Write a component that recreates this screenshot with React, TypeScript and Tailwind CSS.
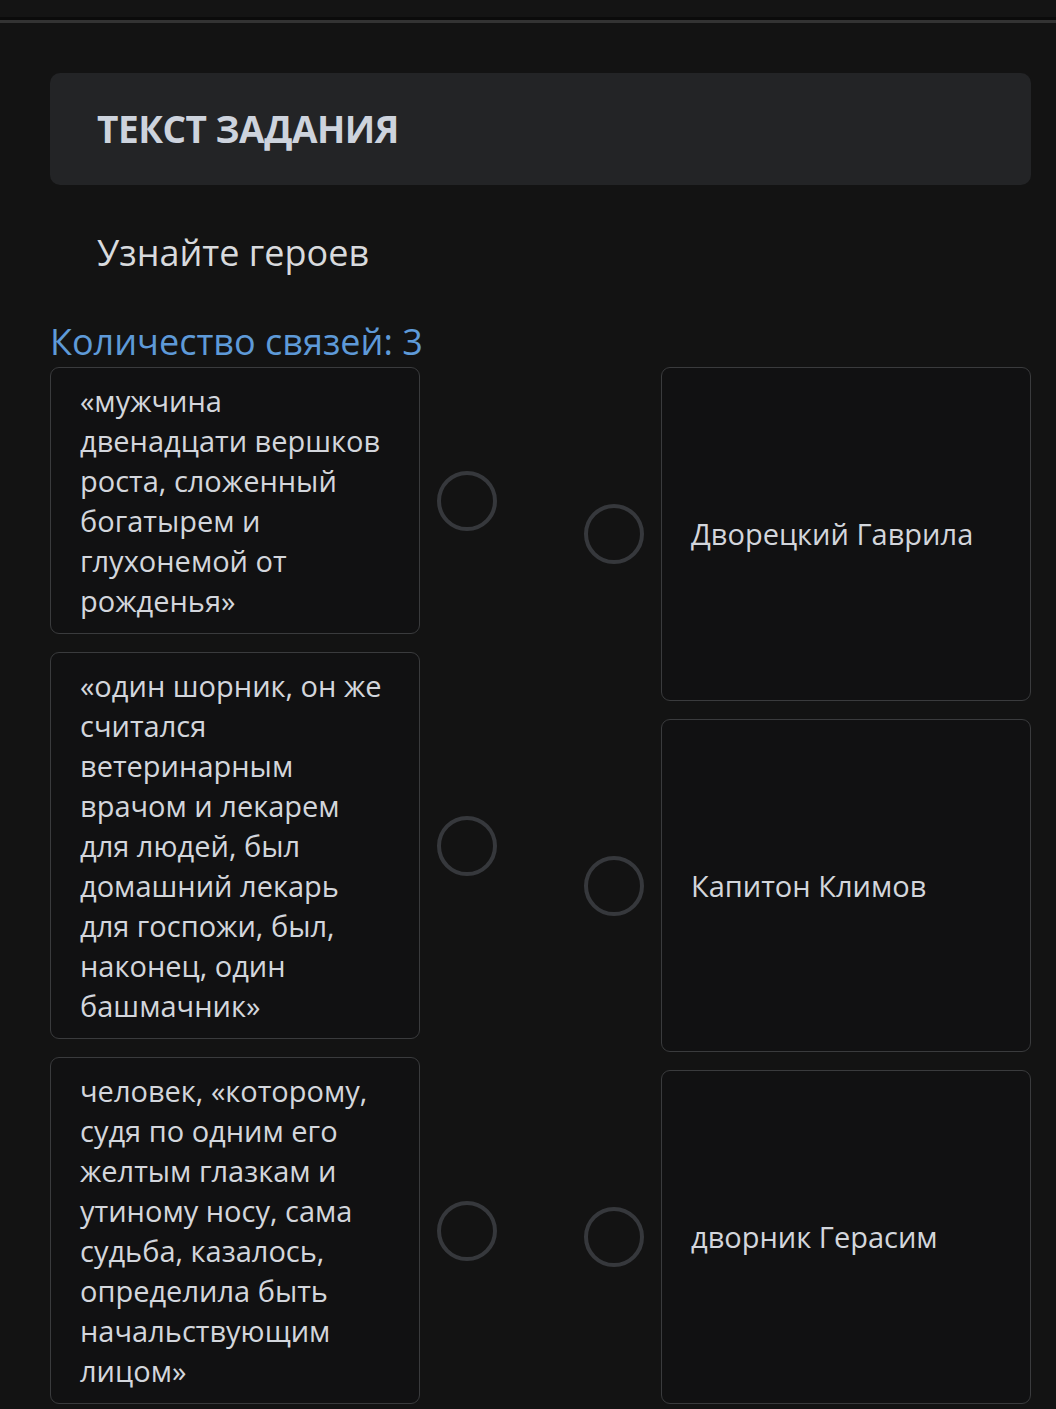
const left = [
  "«мужчина двенадцати вершков роста, сложенный богатырем и глухонемой от рожденья»",
  "«один шорник, он же считался ветеринарным врачом и лекарем для людей, был домашний лекарь для госпожи, был, наконец, один башмачник»",
  "человек, «которому, судя по одним его желтым глазкам и утиному носу, сама судьба, казалось, определила быть начальствующим лицом»",
];

const right = ["Дворецкий Гаврила", "Капитон Климов", "дворник Герасим"];

function Dot() {
  return <div className="w-[60px] h-[60px] shrink-0 rounded-full border-[4px] border-[#36383c]" />;
}

export default function App() {
  return (
    <div className="min-h-[1409px] bg-[#131313] text-[#d3d6dc] font-['Open_Sans',sans-serif]">
      <div className="h-[17px] bg-[#141414]" />
      <div className="h-[3px] bg-[#0b0b0b]" />
      <div className="h-[3px] bg-[#333333]" />

      <div className="pl-[50px] pr-[25px] pt-[50px]">
        <div className="h-[112px] rounded-[10px] bg-[#232426] flex items-center px-[47px]">
          <h1 className="text-[37px] font-bold tracking-[-0.5px] text-[#cdd3dd]">ТЕКСТ ЗАДАНИЯ</h1>
        </div>

        <p className="mt-[40px] px-[47px] text-[36px] leading-[56px] text-[#d8dadd]">Узнайте героев</p>

        <p className="mt-[37px] mb-[1px] text-[36px] leading-[48px] text-[#5e9ad8]">Количество связей: 3</p>

        <div className="flex justify-between">
          <div className="w-[447px] flex flex-col gap-[18px]">
            {left.map((t, i) => (
              <div key={i} className="flex items-center gap-[17px]">
                <div className="w-[370px] shrink-0 rounded-[9px] border border-[#3a3b3d] bg-[#111112] px-[29px] py-[12.5px] text-[29px] leading-[40px]">
                  {t}
                </div>
                <Dot />
              </div>
            ))}
          </div>

          <div className="w-[447px] flex flex-col gap-[18px]">
            {right.map((t, i) => (
              <div key={i} className="flex-1 flex items-center gap-[17px]">
                <Dot />
                <div className="self-stretch flex-1 flex items-center rounded-[9px] border border-[#3a3b3d] bg-[#111112] px-[29px] text-[29px] leading-[40px]">
                  {t}
                </div>
              </div>
            ))}
          </div>
        </div>
      </div>
    </div>
  );
}
